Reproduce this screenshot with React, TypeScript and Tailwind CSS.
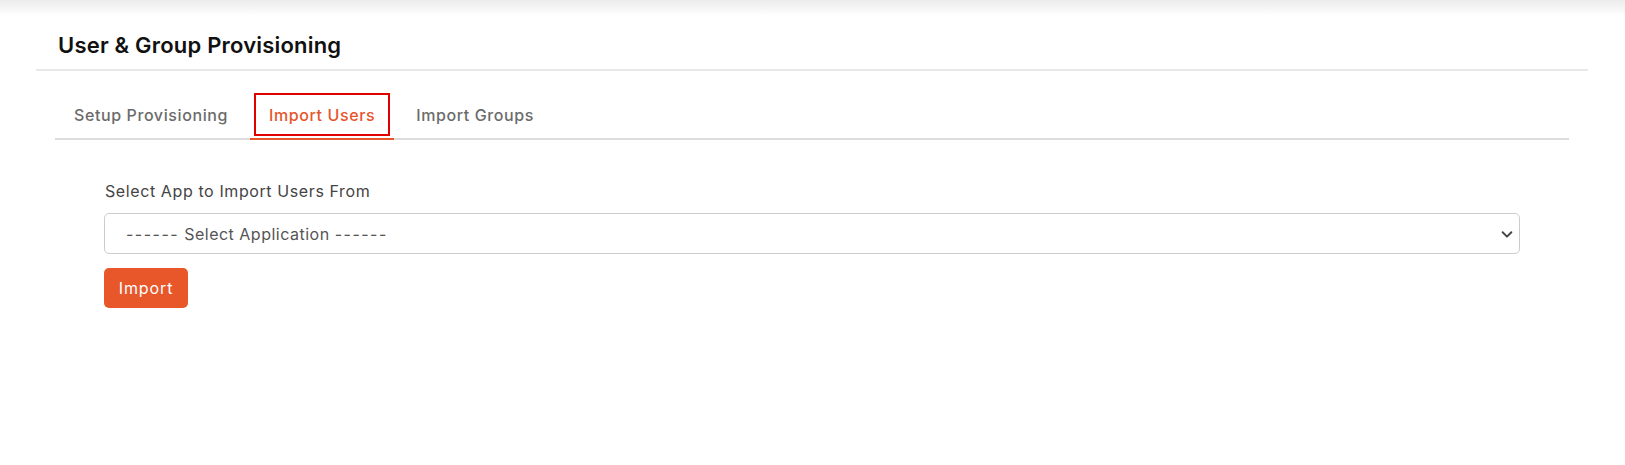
import React from "react";

export default function App() {
  const tabs = [
    { label: "Setup Provisioning", active: false },
    { label: "Import Users", active: true },
    { label: "Import Groups", active: false },
  ];
  return (
    <div className="h-[465px] w-full bg-white" style={{ fontFamily: "Inter, 'Noto Sans', sans-serif" }}>
      <div className="h-[16px] bg-gradient-to-b from-[#ececec] to-white" />
      <div className="mx-[36px] mr-[37px]">
        <div className="pl-[22px] pt-[14px] pb-[9px] border-b-2 border-[#e8e8e8]">
          <h1 className="text-[22px] leading-[30px] font-semibold text-[#111] tracking-[0.2px]">User &amp; Group Provisioning</h1>
        </div>
        <div className="mx-[19px]">
          <ul className="mt-[22px] flex gap-[3px] border-b-2 border-[#dcdcdc]">
            {tabs.map((t) => (
              <li
                key={t.label}
                className={`-mb-[2px] px-[4px] pb-[2px] border-b-2 ${t.active ? "border-[#e5562c]" : "border-transparent"}`}
              >
                <span
                  className={`flex h-[43px] items-center px-[13px] border-2 text-[16px] font-medium tracking-[0.6px] ${
                    t.active ? "border-[#e00000] text-[#e5562c]" : "border-transparent text-[#6b6b6b]"
                  }`}
                >
                  {t.label}
                </span>
              </li>
            ))}
          </ul>
          <div className="px-[49px] pt-[39px]">
            <label className="block text-[16px] leading-[24px] text-[#444] pl-[1px] tracking-[0.6px]">Select App to Import Users From</label>
            <div className="mt-[10px] relative flex h-[41px] items-center rounded-[5px] border border-[#cccccc] bg-white pl-[21px]">
              <span className="text-[16px] text-[#555] tracking-[0.5px]">
                <span className="tracking-[1.5px]">------</span> Select Application <span className="tracking-[1.5px]">------</span>
              </span>
              <svg className="absolute right-[5px] top-[13px]" width="14" height="14" viewBox="0 0 16 16" fill="none">
                <path d="M3 6l5 5 5-5" stroke="#444" strokeWidth="2.2" strokeLinecap="round" strokeLinejoin="round" />
              </svg>
            </div>
            <button className="mt-[14px] flex h-[40px] w-[84px] items-center justify-center rounded-[5px] bg-[#e8572a] text-[16px] text-white tracking-[0.9px]">
              Import
            </button>
          </div>
        </div>
      </div>
    </div>
  );
}
